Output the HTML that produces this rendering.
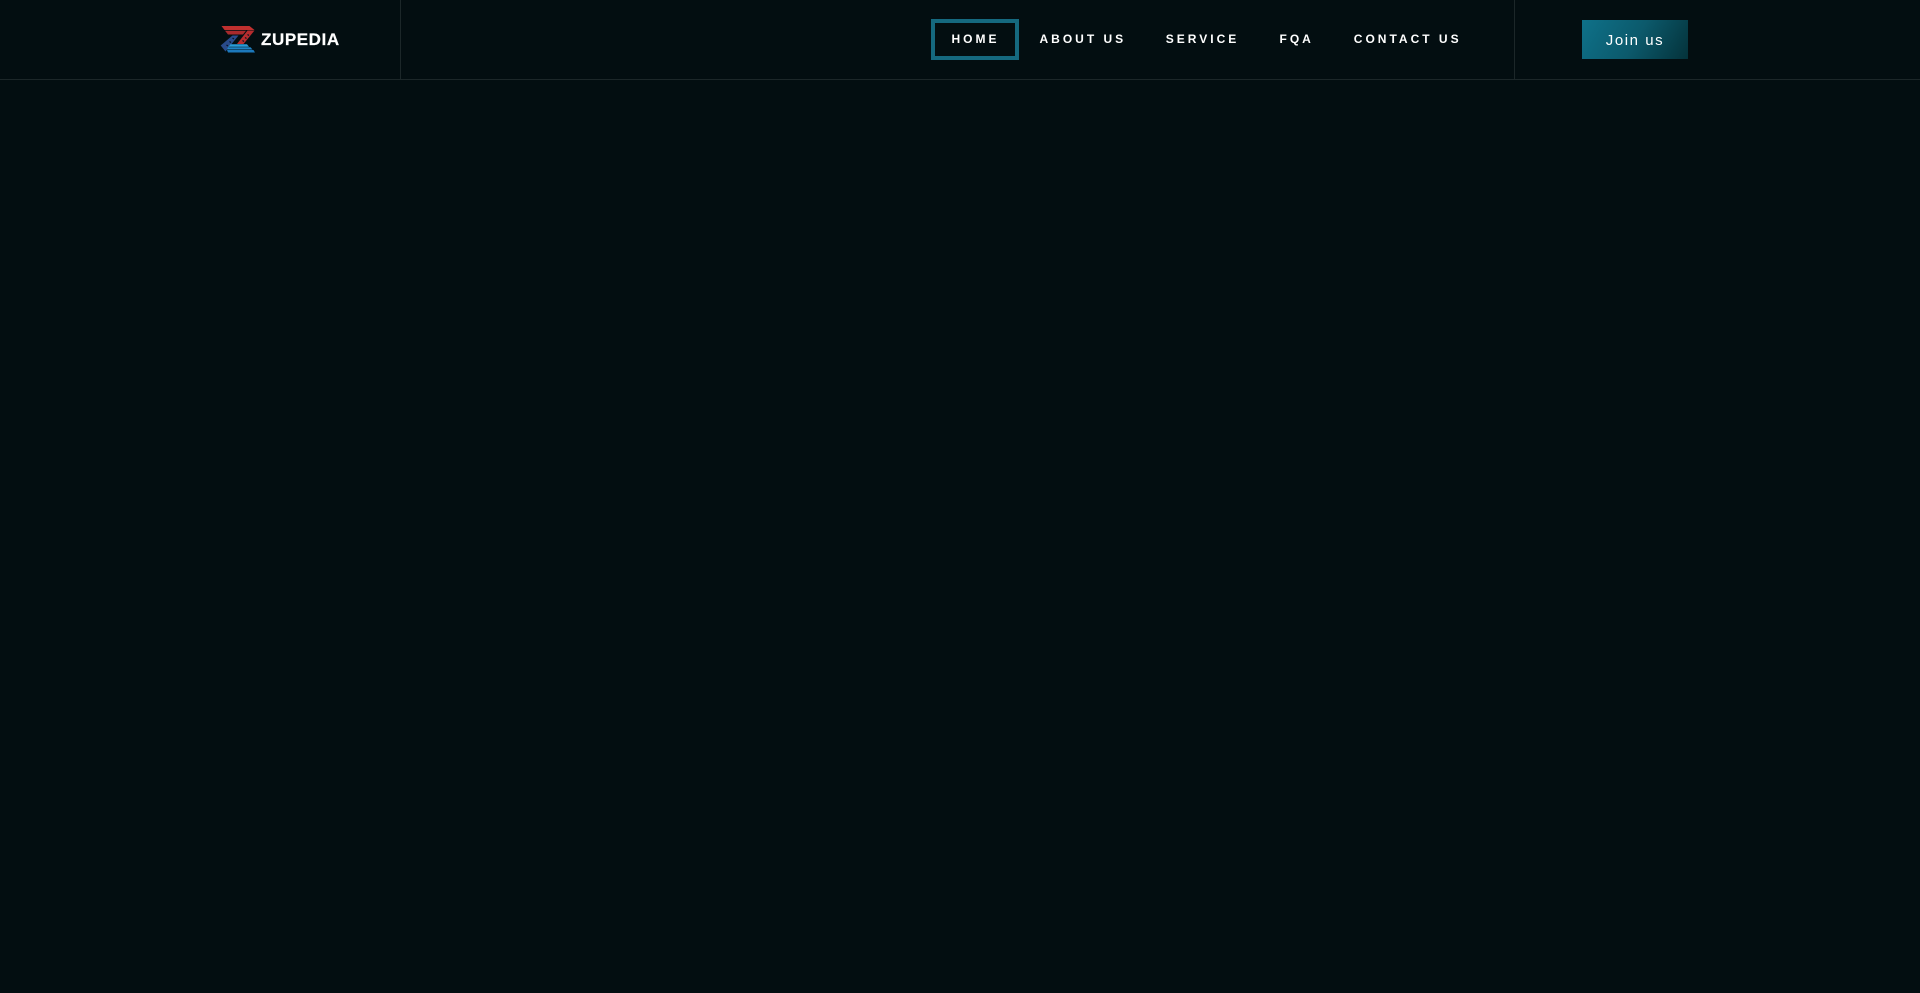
<!DOCTYPE html>
<html lang="en">
<head>
<meta charset="utf-8">
<title>Zupedia</title>
<style>
html,body{margin:0;padding:0;width:1920px;height:993px;overflow:hidden;background:#030e11;font-family:"Liberation Sans",sans-serif;color:#fff}
.abs{position:absolute}
.hl{left:0;top:79px;width:1920px;height:1px;background:#1c2729}
.vl{top:0;width:1px;height:79px;background:#1c2729}
.nav{top:32px;font-size:12px;line-height:15px;font-weight:700;letter-spacing:3px;white-space:nowrap;color:#fff;text-decoration:none}
.home{left:931px;top:19px;width:88px;height:41px;box-sizing:border-box;border:4px solid #15697f}
.btn{left:1582px;top:20px;width:106px;height:39px;background:linear-gradient(120deg,#0e7189 0%,#0c5a6c 50%,#04323a 100%);font-size:15px;line-height:41px;letter-spacing:1.55px;text-align:center;color:#fff}
.brand{left:261px;top:29.500px;font-size:17px;line-height:20px;font-weight:700;letter-spacing:.58px;color:#fff;white-space:nowrap;-webkit-text-stroke:.2px #fff}
</style>
</head>
<body>
<div class="abs hl"></div>
<div class="abs vl" style="left:400px"></div>
<div class="abs vl" style="left:1514px"></div>

<svg class="abs" style="left:220px;top:24px" width="38" height="32" viewBox="0 0 38 32">
<path d="M1.500 2H29.500L34.500 6H4.500Z" fill="#c0302f"/>
<path d="M5 6.700H26L23 10.500H8Z" fill="#a82a2c"/>
<path d="M27.500 6.500H34.500L23.500 20H17Z" fill="#b62c2e"/>
<path d="M12.500 11.500H18.500L5.500 27.500 0.700 21.500Z" fill="#294a8a"/>
<path d="M10.500 20.300H27L29 22.700H8.500Z" fill="#2a9bd8"/>
<path d="M8 23.300H30.500L32.500 25.500H7Z" fill="#1f83c6"/>
<path d="M7 26H33.500L35 28.500H8Z" fill="#1c78bb"/>
<path d="M27.500 10.500l1.500 1M25 13.500l1.500 1M22.500 16.500l1.500 1M12.500 14l1.500 1M9.500 17.500l1.500 1M6.500 21l1.500 1" stroke="#0a1420" stroke-width="1.200" fill="none"/>
</svg>
<div class="abs brand">ZUPEDIA</div>

<div class="abs home"></div>
<a class="abs nav" style="left:951.500px">HOME</a>
<a class="abs nav" style="left:1039.500px">ABOUT US</a>
<a class="abs nav" style="left:1165.800px">SERVICE</a>
<a class="abs nav" style="left:1279.500px">FQA</a>
<a class="abs nav" style="left:1353.800px">CONTACT US</a>
<div class="abs btn">Join us</div>
</body>
</html>
